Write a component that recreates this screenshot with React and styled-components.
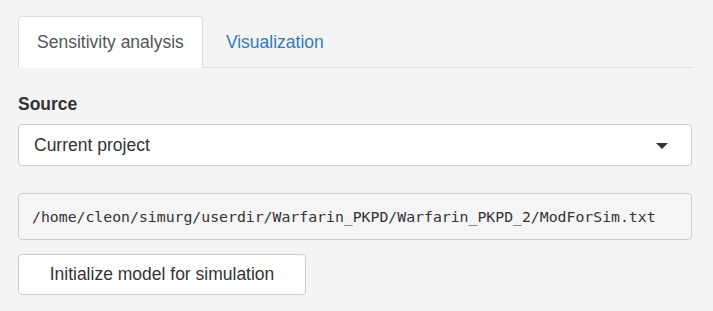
import styled, { createGlobalStyle } from 'styled-components';

const __BORDER = '#cccccc';
const __TAB_BORDER = '#dddddd';
const __LINK = '#337ab7';

const GlobalStyle = createGlobalStyle`
    html, body {
        margin:0;
        padding:0;
        background:#f4f4f4;
    }
    body {
        font-family:"Liberation Sans", Arial, sans-serif;
        color:#333;
    }
`;

const Page = styled.div`
    padding:16px 21px 16px 18px;
`;

const TabBar = styled.div`
    display:flex;
    align-items:flex-end;
    border-bottom:1px solid ${__TAB_BORDER};
`;

const Tab = styled.div`
    height:50px;
    display:flex;
    align-items:center;
    padding:0 18px;
    margin-right:4px;
    margin-bottom:-1px;
    font-size:17.5px;
    border:1px solid ${(p) => (p.$active ? __TAB_BORDER : 'transparent')};
    border-bottom-color:${(p) => (p.$active ? '#fff' : 'transparent')};
    border-radius:4px 4px 0 0;
    background:${(p) => (p.$active ? '#fff' : 'transparent')};
    color:${(p) => (p.$active ? '#555' : __LINK)};
    cursor:pointer;
`;

const Content = styled.div`
    padding-top:26px;
    display:flex;
    flex-direction:column;
`;

const Label = styled.div`
    font-size:17.5px;
    font-weight:700;
    line-height:20px;
    margin-bottom:10px;
`;

const Select = styled.div`
    height:40px;
    border:1px solid ${__BORDER};
    border-radius:4px;
    background:#fff;
    display:flex;
    align-items:center;
    justify-content:space-between;
    padding:0 23px 0 15px;
    font-size:17.5px;
    color:#333;
`;

const Caret = styled.span`
    width:0;
    height:0;
    border-left:6px solid transparent;
    border-right:6px solid transparent;
    border-top:6px solid #333;
    margin-top:1px;
`;

const PathBox = styled.pre`
    margin:27px 0 0 0;
    box-sizing:border-box;
    height:47px;
    display:flex;
    align-items:center;
    padding:0 13px;
    background:#f5f5f5;
    border:1px solid ${__BORDER};
    border-radius:4px;
    font-family:"DejaVu Sans Mono", "Liberation Mono", monospace;
    font-size:14.8px;
    color:#333;
`;

const Button = styled.button`
    margin-top:14px;
    align-self:flex-start;
    width:288px;
    height:41px;
    background:#fff;
    border:1px solid ${__BORDER};
    border-radius:4px;
    font-family:"Liberation Sans", Arial, sans-serif;
    font-size:17.5px;
    color:#333;
    cursor:pointer;
    &:focus{
        outline:none;
    }
`;

const App = () => {
    return (
        <>
            <GlobalStyle />
            <Page>
                <TabBar>
                    <Tab $active>Sensitivity analysis</Tab>
                    <Tab>Visualization</Tab>
                </TabBar>
                <Content>
                    <Label>Source</Label>
                    <Select>
                        Current project
                        <Caret />
                    </Select>
                    <PathBox>/home/cleon/simurg/userdir/Warfarin_PKPD/Warfarin_PKPD_2/ModForSim.txt</PathBox>
                    <Button type='button'>Initialize model for simulation</Button>
                </Content>
            </Page>
        </>
    );
}

export default App;
